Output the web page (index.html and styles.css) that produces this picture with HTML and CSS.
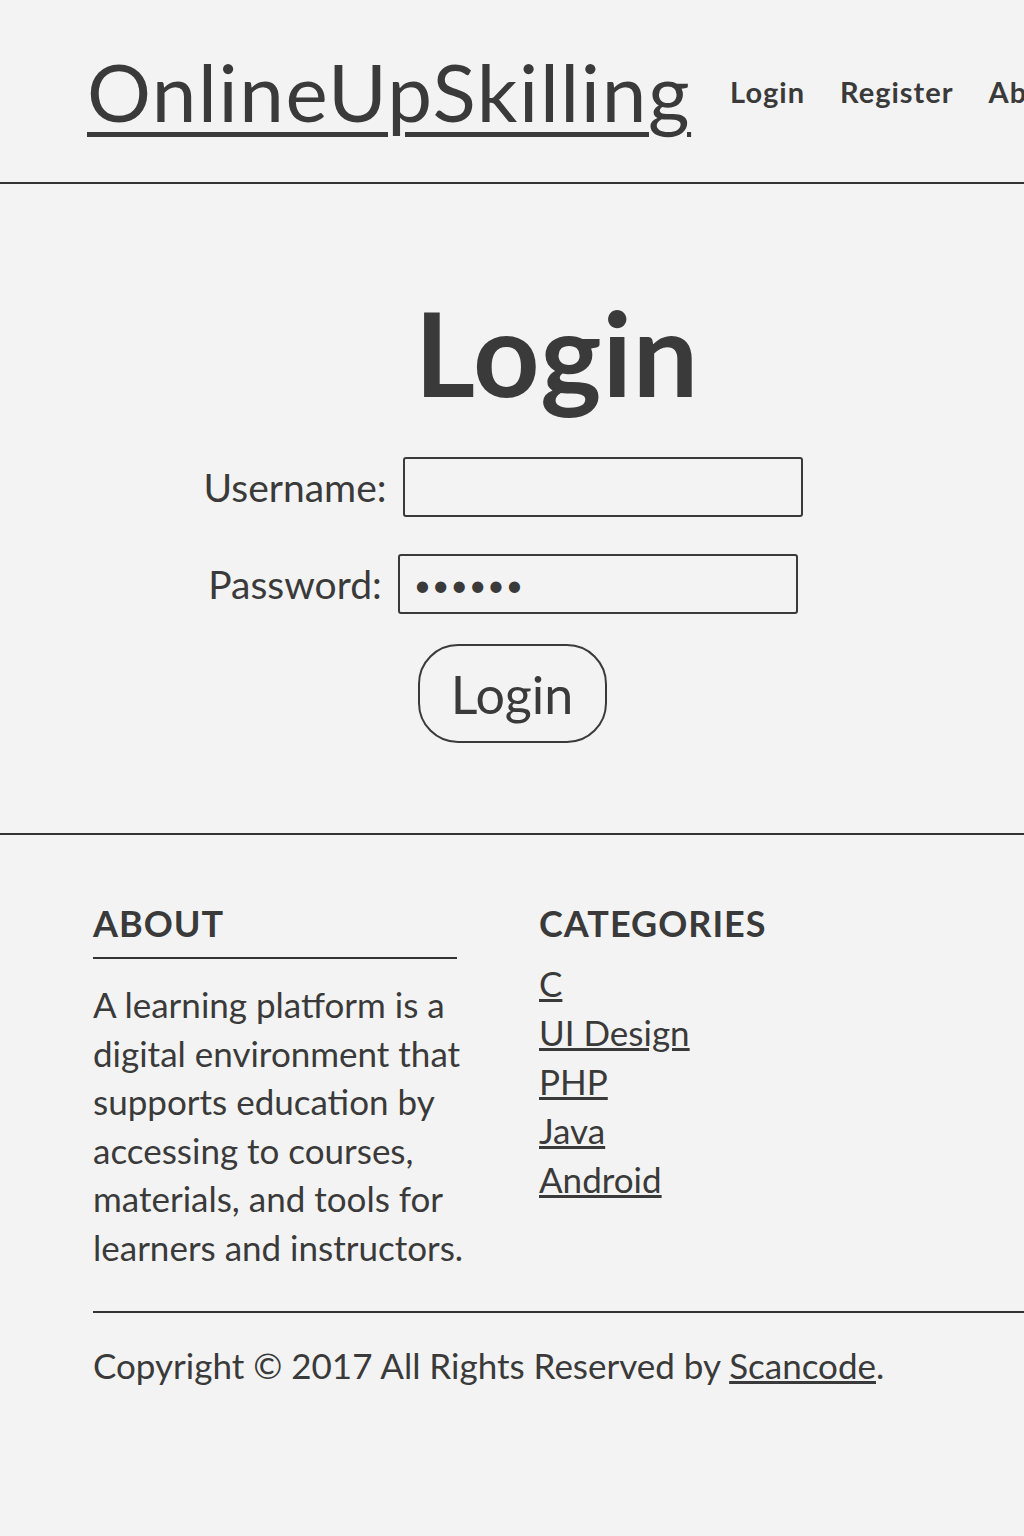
FILE: index.html
```html
<!DOCTYPE html>
<html lang="en">
<head>
    <title>Login - OnlineUpSkilling</title>
    <link rel="stylesheet" href="styles.css">
</head>
<body>
    <header class="site-header">
        <a class="logo" href="#">OnlineUpSkilling</a>
        <nav class="nav">
            <a href="#">Login</a>
            <a href="#">Register</a>
            <a href="#">About</a>
        </nav>
    </header>

    <main class="login">
        <h1>Login</h1>
        <form class="login-form">
            <div class="form-row">
                <label for="username">Username:</label>
                <input type="text" id="username">
            </div>
            <div class="form-row">
                <label for="password">Password:</label>
                <input type="password" id="password" value="secret">
            </div>
            <button type="submit" class="button">Login</button>
        </form>
    </main>

    <footer class="site-footer">
        <div class="footer-cols">
            <div class="footer-about">
                <h3>ABOUT</h3>
                <p>A learning platform is a digital environment that supports education by accessing to courses, materials, and tools for learners and instructors.</p>
            </div>
            <div class="footer-categories">
                <h3>CATEGORIES</h3>
                <ul>
                    <li><a href="#">C</a></li>
                    <li><a href="#">UI Design</a></li>
                    <li><a href="#">PHP</a></li>
                    <li><a href="#">Java</a></li>
                    <li><a href="#">Android</a></li>
                </ul>
            </div>
        </div>
        <div class="copyright">
            Copyright &copy; 2017 All Rights Reserved by <a href="#">Scancode</a>.
        </div>
    </footer>
</body>
</html>
```

FILE: styles.css
```css
body {
    margin: 0;
    padding: 0;
    background-color: #f3f3f3;
    color: #3a3a3a;
    font-family: Lato, "Open Sans", sans-serif;
    overflow-x: hidden;
}

a {
    color: #3a3a3a;
}

/* header */
.site-header {
    display: flex;
    align-items: center;
    height: 182px;
    padding-left: 87px;
    border-bottom: 2px solid #333;
    white-space: nowrap;
}

.logo {
    font-size: 80px;
    letter-spacing: 1.6px;
    line-height: 1.2;
    text-decoration-thickness: 5px;
    text-underline-offset: 10px;
}

.nav {
    display: flex;
    gap: 35px;
    margin-left: 39px;
}

.nav a {
    font-size: 29px;
    font-weight: 700;
    letter-spacing: 1px;
    text-decoration: none;
}

/* login */
.login {
    padding: 111px 0 90px;
    border-bottom: 2px solid #333;
}

.login h1 {
    margin: 0;
    padding-left: 90px;
    font-size: 116px;
    font-weight: 700;
    letter-spacing: 1px;
    line-height: 1;
    text-align: center;
}

.login-form {
    display: flex;
    flex-direction: column;
    align-items: center;
    margin-top: 46px;
}

.form-row {
    display: flex;
    align-items: center;
    gap: 16px;
    margin-right: 18px;
    margin-bottom: 37px;
}

.form-row label {
    font-size: 39px;
}

.form-row input {
    box-sizing: border-box;
    width: 400px;
    height: 60px;
    padding: 0 14px;
    background: transparent;
    border: 2px solid #3a3a3a;
    border-radius: 3px;
    color: #3a3a3a;
    font-family: inherit;
    font-size: 30px;
    letter-spacing: 1px;
}

.form-row + .form-row {
    margin-bottom: 30px;
}

.button {
    box-sizing: border-box;
    width: 189px;
    height: 99px;
    background: transparent;
    border: 2.5px solid #3a3a3a;
    border-radius: 40px;
    color: #3a3a3a;
    font-family: inherit;
    font-size: 52px;
    cursor: pointer;
}

/* footer */
.site-footer {
    padding: 66px 0 100px 93px;
}

.footer-cols {
    display: flex;
    gap: 66px;
}

.footer-about {
    width: 380px;
}

.site-footer h3 {
    margin: 0;
    padding-bottom: 12px;
    border-bottom: 2px solid transparent;
    font-size: 36px;
    font-weight: 700;
    letter-spacing: 1px;
    line-height: 44px;
}

.footer-about h3 {
    width: 364px;
    border-bottom-color: #333;
}

.footer-about p {
    margin: 21px 0 0;
    font-size: 35px;
    line-height: 48.6px;
}

.footer-categories ul {
    margin: 0;
    padding: 0;
    list-style: none;
    font-size: 35px;
    line-height: 49px;
}

.copyright {
    margin-top: 39px;
    padding-top: 28px;
    border-top: 2px solid #333;
    font-size: 35px;
    line-height: 48.6px;
    white-space: nowrap;
}
```
